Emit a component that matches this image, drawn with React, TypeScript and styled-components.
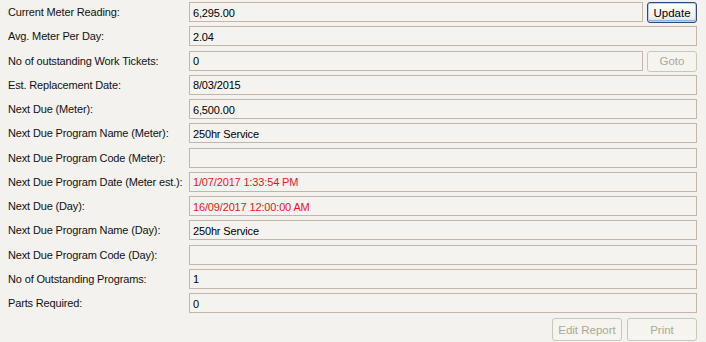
import { Fragment } from "react";
import styled, { createGlobalStyle } from "styled-components";

const GlobalStyle = createGlobalStyle`
  html, body {
    margin: 0;
    padding: 0;
    background: #f4f2ee;
  }
`;

interface Row {
  label: string;
  value: string;
  alert?: boolean;
  action?: { text: string; enabled: boolean };
}

const rows: Row[] = [
  { label: "Current Meter Reading:", value: "6,295.00", action: { text: "Update", enabled: true } },
  { label: "Avg. Meter Per Day:", value: "2.04" },
  { label: "No of outstanding Work Tickets:", value: "0", action: { text: "Goto", enabled: false } },
  { label: "Est. Replacement Date:", value: "8/03/2015" },
  { label: "Next Due (Meter):", value: "6,500.00" },
  { label: "Next Due Program Name (Meter):", value: "250hr Service" },
  { label: "Next Due Program Code (Meter):", value: "" },
  { label: "Next Due Program Date (Meter est.):", value: "1/07/2017 1:33:54 PM", alert: true },
  { label: "Next Due (Day):", value: "16/09/2017 12:00:00 AM", alert: true },
  { label: "Next Due Program Name (Day):", value: "250hr Service" },
  { label: "Next Due Program Code (Day):", value: "" },
  { label: "No of Outstanding Programs:", value: "1" },
  { label: "Parts Required:", value: "0" },
];

const Panel = styled.div`
  width: 706px;
  height: 342px;
  box-sizing: border-box;
  padding: 2px 9px 0 8px;
  font-family: "Liberation Sans", Tahoma, sans-serif;
  font-size: 11px;
  letter-spacing: -0.15px;
  color: #000;
  background: #f4f2ee;
`;

const Grid = styled.div`
  display: grid;
  grid-template-columns: 181px 1fr 54px;
  row-gap: 4.25px;
  grid-auto-rows: 20px;
`;

const Label = styled.div`
  display: flex;
  align-items: center;
  white-space: nowrap;
  color: #111;
`;

const Field = styled.div<{ $alert?: boolean; $wide: boolean }>`
  grid-column: ${(p) => (p.$wide ? "2 / 4" : "2")};
  display: flex;
  align-items: center;
  box-sizing: border-box;
  padding: 1px 3px 0;
  border: 1px solid #c3b6a9;
  background: #f5f3ef;
  color: ${(p) => (p.$alert ? "#f0141c" : "#000")};
  white-space: nowrap;
`;

const Button = styled.button<{ $enabled: boolean }>`
  box-sizing: border-box;
  justify-self: end;
  width: 50px;
  height: 21px;
  margin: 0;
  padding: 0;
  font-family: inherit;
  font-size: 11.5px;
  letter-spacing: 0;
  border-radius: 3px;
  border: 1px solid ${(p) => (p.$enabled ? "#2a4a7a" : "#cbc7b8")};
  color: ${(p) => (p.$enabled ? "#000" : "#aca899")};
  background: ${(p) =>
    p.$enabled
      ? "linear-gradient(#ffffff, #f3f1ea 70%, #e2ded2)"
      : "#f5f4ee"};
  box-shadow: ${(p) =>
    p.$enabled ? "inset 0 0 0 1px #b6d2f4, inset 0 -1px 0 1px #8eb4e6" : "none"};
`;

const Footer = styled.div`
  display: flex;
  justify-content: flex-end;
  gap: 5px;
  margin-top: 5px;
`;

const FooterButton = styled(Button)`
  width: 70px;
  height: 23px;
`;

export default function App() {
  return (
    <Panel>
      <GlobalStyle />
      <Grid>
        {rows.map((r) => (
          <Fragment key={r.label}>
            <Label>{r.label}</Label>
            <Field $alert={r.alert} $wide={!r.action}>
              {r.value}
            </Field>
            {r.action && (
              <Button $enabled={r.action.enabled} disabled={!r.action.enabled}>
                {r.action.text}
              </Button>
            )}
          </Fragment>
        ))}
      </Grid>
      <Footer>
        <FooterButton $enabled={false} disabled>
          Edit Report
        </FooterButton>
        <FooterButton $enabled={false} disabled>
          Print
        </FooterButton>
      </Footer>
    </Panel>
  );
}
